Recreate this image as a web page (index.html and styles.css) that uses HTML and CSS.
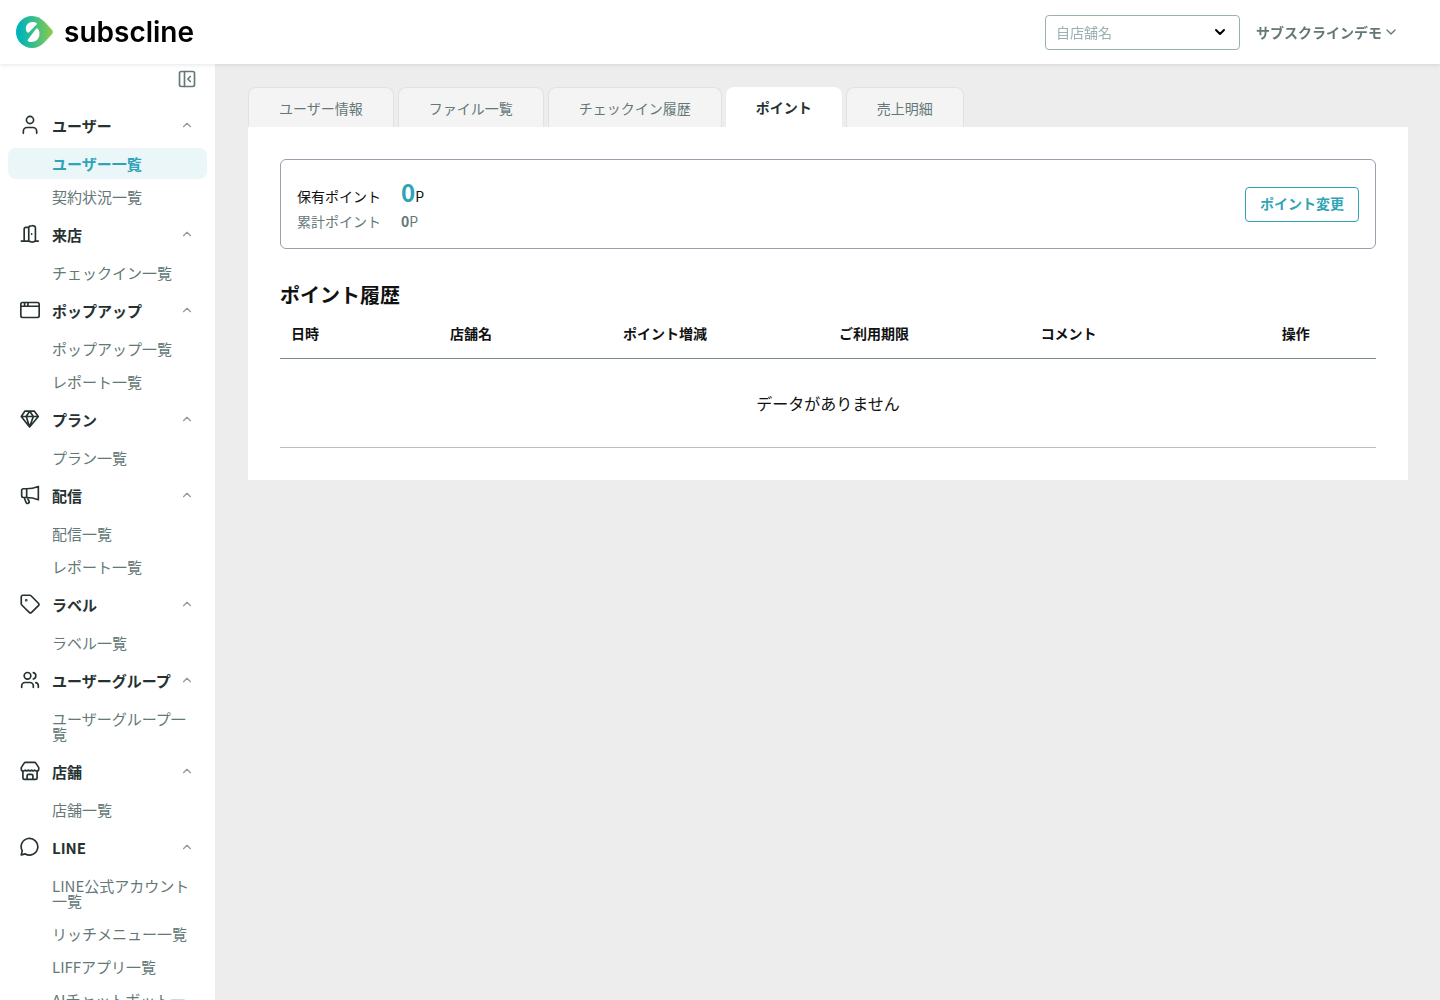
FILE: index.html
```
<!DOCTYPE html>
<html lang="ja">

<head>
    <meta charset="UTF-8">
    <meta name="viewport" content="width=device-width, initial-scale=1.0">
    <title>ポイント | subscline</title>
    <link rel="stylesheet" href="styles.css">
</head>

<body>
    <!-- shared chevrons -->
    <svg class="sprite" aria-hidden="true">
        <symbol id="chevron-up" viewBox="0 0 24 24"><path d="m18 15-6-6-6 6"/></symbol>
        <symbol id="chevron-down" viewBox="0 0 24 24"><path d="m6 9 6 6 6-6"/></symbol>
    </svg>

    <header class="header">
        <a class="logo" href="#">
            <svg class="logo-mark" viewBox="0 0 38 32" aria-hidden="true">
                <defs>
                    <linearGradient id="logo-gradient" x1="0" y1="0" x2="1" y2="0">
                        <stop offset="0.1" stop-color="#00b4b8"/>
                        <stop offset="1" stop-color="#8ccb4a"/>
                    </linearGradient>
                </defs>
                <path d="M16 0a16 16 0 1 0 0 32c5 0 9-2.300 12.500-5.800l7.700-8.300q1.700-1.900 0-3.800l-7.700-8.300C25 2.300 21 0 16 0z" fill="url(#logo-gradient)"/>
                <path d="M11.500 16.600C8.500 14 9 6 17 6c2.500 0 4.500 1 3.800 2.200L13.500 15.800c-.6.7-1.300 1.200-2 .8z" fill="#fff"/>
                <path d="M21.500 12.600C25 15.500 24.500 26 15.500 26c-3 0-4.500-1.300-3.500-2.600L19.500 13.400c.6-.8 1.300-1.200 2-.8z" fill="#fff"/>
            </svg>
            <span class="logo-text">subscline</span>
        </a>
        <div class="header-right">
            <div class="store-select">
                <select aria-label="自店舗名">
                    <option>自店舗名</option>
                </select>
                <svg class="icon store-arrow" aria-hidden="true"><use href="#chevron-down"/></svg>
            </div>
            <button class="account" type="button">
                サブスクラインデモ
                <svg class="icon account-arrow" aria-hidden="true"><use href="#chevron-down"/></svg>
            </button>
        </div>
    </header>

    <div class="layout">
        <aside class="sidebar">
            <div class="sidebar-top">
                <button class="collapse" type="button" aria-label="メニューを閉じる">
                    <svg class="icon" viewBox="0 0 24 24"><rect x="3" y="3" width="18" height="18" rx="2"/><path d="M9 3v18M16 15l-3-3 3-3"/></svg>
                </button>
            </div>
            <nav>
                <section class="menu">
                    <button class="menu-title" type="button">
                        <svg class="icon menu-icon" viewBox="0 0 24 24"><path d="M20 22v-2.500a4.500 4.500 0 0 0-4.500-4.500h-7A4.500 4.500 0 0 0 4 19.500V22"/><circle cx="12" cy="6" r="4.300"/></svg>
                        <span>ユーザー</span>
                        <svg class="icon menu-arrow"><use href="#chevron-up"/></svg>
                    </button>
                    <ul class="menu-list">
                        <li><a class="active" href="#">ユーザー一覧</a></li>
                        <li><a href="#">契約状況一覧</a></li>
                    </ul>
                </section>
                <section class="menu">
                    <button class="menu-title" type="button">
                        <svg class="icon menu-icon" viewBox="0 0 24 24"><path d="M1.500 20.500h9M5 20.500V6a2 2 0 0 1 2-2h3.500M18.500 20.500H22M10.500 4.300v14.900a2 2 0 0 0 1.600 2l2 .4a2 2 0 0 0 .9 0l2-.5a2 2 0 0 0 1.500-1.900V4.500a2 2 0 0 0-1.400-1.900l-1.700-.5a2 2 0 0 0-1.100 0l-2.400.5a2 2 0 0 0-1.400 1.700zM14 11.800v.5"/></svg>
                        <span>来店</span>
                        <svg class="icon menu-arrow"><use href="#chevron-up"/></svg>
                    </button>
                    <ul class="menu-list">
                        <li><a href="#">チェックイン一覧</a></li>
                    </ul>
                </section>
                <section class="menu">
                    <button class="menu-title" type="button">
                        <svg class="icon menu-icon" viewBox="0 0 24 24"><rect x="1" y="3" width="22" height="18" rx="2"/><path d="M1 7.500h22M5.500 3.500v4M9.500 3.500v4"/></svg>
                        <span>ポップアップ</span>
                        <svg class="icon menu-arrow"><use href="#chevron-up"/></svg>
                    </button>
                    <ul class="menu-list">
                        <li><a href="#">ポップアップ一覧</a></li>
                        <li><a href="#">レポート一覧</a></li>
                    </ul>
                </section>
                <section class="menu">
                    <button class="menu-title" type="button">
                        <svg class="icon menu-icon" viewBox="0 0 24 24"><path d="M6 2.500h11l5 6.500L11.500 21.500 1.500 9zM1.500 9H22M11.500 2.500L7.500 9l4 12.500L16 9l-4.500-6.500"/></svg>
                        <span>プラン</span>
                        <svg class="icon menu-arrow"><use href="#chevron-up"/></svg>
                    </button>
                    <ul class="menu-list">
                        <li><a href="#">プラン一覧</a></li>
                    </ul>
                </section>
                <section class="menu">
                    <button class="menu-title" type="button">
                        <svg class="icon menu-icon" viewBox="0 0 24 24"><path d="M8 4.500H4a2 2 0 0 0-2 2V13a2 2 0 0 0 2 2h4zM8 4.500c5 0 9.500-1 14-2.800v16.100c-4.500-1.800-9-2.800-14-2.800M5 15l2.300 6a1.800 1.800 0 0 0 2.500 1c1.300-.6 1.500-1.700 1-2.800L9.500 17v-2"/></svg>
                        <span>配信</span>
                        <svg class="icon menu-arrow"><use href="#chevron-up"/></svg>
                    </button>
                    <ul class="menu-list">
                        <li><a href="#">配信一覧</a></li>
                        <li><a href="#">レポート一覧</a></li>
                    </ul>
                </section>
                <section class="menu">
                    <button class="menu-title" type="button">
                        <svg class="icon menu-icon" viewBox="0 0 24 24"><path d="M11.800 1.500H3.500a2 2 0 0 0-2 2v8.300a2 2 0 0 0 .6 1.400l9 8.900a2 2 0 0 0 2.800 0l8.200-8.200a2 2 0 0 0 0-2.800l-8.900-9a2 2 0 0 0-1.400-.6z"/><circle cx="7.500" cy="7.500" r=".6"/></svg>
                        <span>ラベル</span>
                        <svg class="icon menu-arrow"><use href="#chevron-up"/></svg>
                    </button>
                    <ul class="menu-list">
                        <li><a href="#">ラベル一覧</a></li>
                    </ul>
                </section>
                <section class="menu">
                    <button class="menu-title" type="button">
                        <svg class="icon menu-icon" viewBox="0 0 24 24"><path d="M16 21v-2a4 4 0 0 0-4-4H6a4 4 0 0 0-4 4v2"/><circle cx="9" cy="7" r="4"/><path d="M22 21v-2a4 4 0 0 0-3-3.870M16 3.130a4 4 0 0 1 0 7.750"/></svg>
                        <span>ユーザーグループ</span>
                        <svg class="icon menu-arrow"><use href="#chevron-up"/></svg>
                    </button>
                    <ul class="menu-list">
                        <li><a href="#">ユーザーグループ一覧</a></li>
                    </ul>
                </section>
                <section class="menu">
                    <button class="menu-title" type="button">
                        <svg class="icon menu-icon" viewBox="0 0 24 24"><path d="M1.500 8 5 2.600A2 2 0 0 1 6.700 1.700h10.600A2 2 0 0 1 19 2.600L22.500 8v1.500a2.500 2.500 0 0 1-2.500 2.500 2.700 2.700 0 0 1-2.200-1 2.700 2.700 0 0 1-3.800 0 2.700 2.700 0 0 1-4 0 2.700 2.700 0 0 1-3.800 0A2.700 2.700 0 0 1 4 12a2.500 2.500 0 0 1-2.500-2.500z"/><path d="M3.500 12v8a2 2 0 0 0 2 2h13a2 2 0 0 0 2-2v-8M15.500 22v-4a2 2 0 0 0-2-2h-3a2 2 0 0 0-2 2v4"/></svg>
                        <span>店舗</span>
                        <svg class="icon menu-arrow"><use href="#chevron-up"/></svg>
                    </button>
                    <ul class="menu-list">
                        <li><a href="#">店舗一覧</a></li>
                    </ul>
                </section>
                <section class="menu">
                    <button class="menu-title" type="button">
                        <svg class="icon menu-icon" viewBox="0 0 24 24"><path d="M6.400 20.300A10 10 0 1 0 2.700 16.600L1.500 21.500z"/></svg>
                        <span>LINE</span>
                        <svg class="icon menu-arrow"><use href="#chevron-up"/></svg>
                    </button>
                    <ul class="menu-list">
                        <li><a href="#">LINE公式アカウント一覧</a></li>
                        <li><a href="#">リッチメニュー一覧</a></li>
                        <li><a href="#">LIFFアプリ一覧</a></li>
                        <li><a href="#">AIチャットボット一覧</a></li>
                    </ul>
                </section>
            </nav>
        </aside>

        <main class="main">
            <nav class="tabs">
                <a class="tab" href="#">ユーザー情報</a>
                <a class="tab" href="#">ファイル一覧</a>
                <a class="tab" href="#">チェックイン履歴</a>
                <a class="tab current" href="#" aria-current="page">ポイント</a>
                <a class="tab" href="#">売上明細</a>
            </nav>
            <div class="panel">
                <div class="point-box">
                    <dl class="points">
                        <dt>保有ポイント</dt>
                        <dd><strong class="point-now">0</strong>P</dd>
                        <dt class="sub">累計ポイント</dt>
                        <dd class="sub"><strong>0</strong>P</dd>
                    </dl>
                    <button class="btn-outline" type="button">ポイント変更</button>
                </div>

                <h2>ポイント履歴</h2>
                <table class="history">
                    <colgroup>
                        <col class="col-date">
                        <col class="col-store">
                        <col class="col-point">
                        <col class="col-limit">
                        <col class="col-comment">
                        <col>
                    </colgroup>
                    <thead>
                        <tr>
                            <th>日時</th>
                            <th>店舗名</th>
                            <th>ポイント増減</th>
                            <th>ご利用期限</th>
                            <th>コメント</th>
                            <th>操作</th>
                        </tr>
                    </thead>
                    <tbody>
                        <tr>
                            <td class="empty" colspan="6">データがありません</td>
                        </tr>
                    </tbody>
                </table>
            </div>
        </main>
    </div>
</body>

</html>
```
FILE: styles.css
```
* {
    box-sizing: border-box;
}

body {
    display: flex;
    flex-direction: column;
    height: 100vh;
    margin: 0;
    background-color: #ededed;
    color: #111;
    font-family: "Noto Sans CJK JP", sans-serif;
    font-size: 14px;
    line-height: 1.5;
}

button,
select {
    font-family: inherit;
    font-size: 14px;
    cursor: pointer;
}

a {
    text-decoration: none;
}

.sprite {
    display: none;
}

.icon {
    flex-shrink: 0;
    width: 20px;
    height: 20px;
    fill: none;
    stroke: currentColor;
    stroke-width: 2;
    stroke-linecap: round;
    stroke-linejoin: round;
}

/* header */
.header {
    position: relative;
    z-index: 1;
    display: flex;
    flex-shrink: 0;
    align-items: center;
    justify-content: space-between;
    height: 64px;
    padding: 0 44px 0 16px;
    background-color: #fff;
    box-shadow: 0 1px 4px rgba(0, 0, 0, 0.1);
}

.logo {
    display: flex;
    align-items: center;
    gap: 10px;
    color: #000;
}

.logo-mark {
    width: 38px;
    height: 32px;
}

.logo-text {
    font-family: Inter, sans-serif;
    font-size: 28px;
    font-weight: 600;
    line-height: 32px;
}

.header-right {
    display: flex;
    align-items: center;
    gap: 16px;
}

.store-select {
    position: relative;
    width: 195px;
}

.store-select select {
    display: block;
    width: 100%;
    height: 35px;
    padding: 0 32px 0 10px;
    border: 1px solid #9bb0b0;
    border-radius: 4px;
    background-color: #fff;
    color: #9bb0b0;
    appearance: none;
}

.store-arrow {
    position: absolute;
    top: 9px;
    right: 12px;
    width: 16px;
    height: 16px;
    color: #000;
    stroke-width: 3;
    pointer-events: none;
}

.account {
    display: flex;
    align-items: center;
    gap: 1px;
    padding: 0;
    border: none;
    background: none;
    color: #657878;
    font-weight: 700;
}

.account-arrow {
    width: 16px;
    height: 16px;
    margin-right: -3px;
}

/* sidebar */
.layout {
    display: flex;
    flex: 1;
    min-height: 0;
}

.sidebar {
    flex-shrink: 0;
    width: 215px;
    padding: 0 8px;
    overflow-y: auto;
    scrollbar-width: none;
    background-color: #fff;
}

.sidebar-top {
    display: flex;
    justify-content: flex-end;
    height: 39px;
    padding: 5px 10px;
}

.collapse {
    height: 20px;
    padding: 0;
    border: none;
    background: none;
    color: #657878;
}

.menu-title {
    display: flex;
    align-items: center;
    width: 100%;
    height: 45px;
    padding: 0 13px 1px 12px;
    border: none;
    background: none;
    color: #263232;
    font-size: 15px;
    font-weight: 700;
    line-height: 15px;
}

.menu-icon {
    margin-right: 12px;
}

.menu-arrow {
    width: 14px;
    height: 14px;
    margin-left: auto;
    color: #8d9a9a;
}

.menu-list {
    display: flex;
    flex-direction: column;
    gap: 2px;
    margin: 0;
    padding: 0;
    list-style: none;
}

.menu-list a {
    display: block;
    padding: 8px 12px 8px 44px;
    border-radius: 8px;
    color: #657878;
    font-size: 15px;
    line-height: 15px;
}

.menu-list .active {
    background-color: #eaf6f8;
    color: #2fa4b6;
    font-weight: 700;
}

/* content */
.main {
    flex: 1;
    min-width: 0;
    padding: 23px 32px 32px 33px;
    overflow-y: auto;
}

.tabs {
    display: flex;
    gap: 4px;
}

.tab {
    height: 40px;
    padding: 0 30px;
    border: 1px solid #e2e2e2;
    border-bottom: none;
    border-radius: 8px 8px 0 0;
    background-color: #f4f4f4;
    color: #657878;
    line-height: 40px;
}

.tab.current {
    border: none;
    background-color: #fff;
    color: #263232;
    font-weight: 700;
}

.panel {
    padding: 32px;
    background-color: #fff;
}

.point-box {
    display: flex;
    align-items: center;
    justify-content: space-between;
    padding: 16px;
    border: 1px solid #9c9fae;
    border-radius: 6px;
}

.points {
    display: grid;
    grid-template-columns: auto auto;
    gap: 3px 20px;
    align-items: baseline;
    margin: 0;
}

.points dd {
    margin: 0;
}

.points strong {
    font-weight: 700;
}

.points .sub {
    color: #657878;
}

.points .point-now {
    color: #2fa4b6;
    font-size: 24px;
    line-height: 32px;
}

.btn-outline {
    height: 35px;
    padding: 0 14px 2px;
    border: 1px solid #2fa4b6;
    border-radius: 4px;
    background-color: #fff;
    color: #2fa4b6;
    font-weight: 700;
}

h2 {
    margin: 32px 0 2px;
    font-size: 20px;
    line-height: 28px;
}

.history {
    width: 100%;
    border-collapse: collapse;
    table-layout: fixed;
}

.col-date {
    width: 14.5%;
}

.col-store {
    width: 15.8%;
}

.col-point {
    width: 19.7%;
}

.col-limit {
    width: 18.4%;
}

.col-comment {
    width: 22%;
}

.history th {
    padding: 12px 11px 14px;
    border-bottom: 1px solid #7b8c8c;
    text-align: left;
}

.history .empty {
    padding: 32px 11px;
    border-bottom: 1px solid #b5bfbf;
    font-size: 16px;
    text-align: center;
}
```
